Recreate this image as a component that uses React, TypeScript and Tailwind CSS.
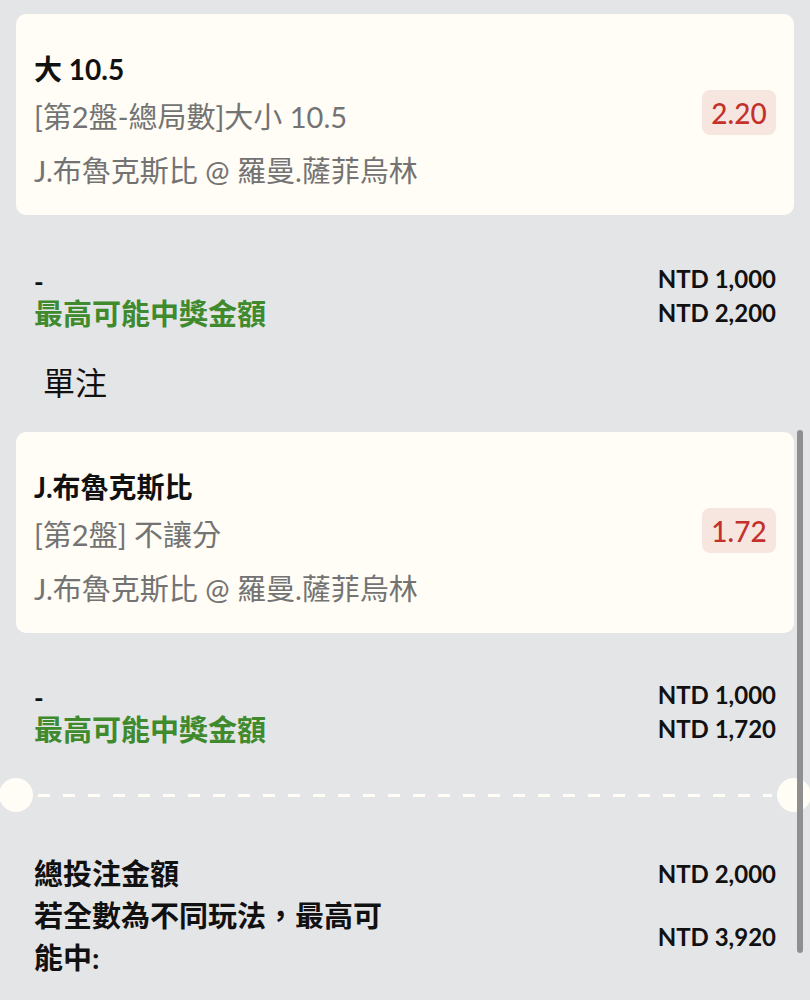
import React from "react";

const FONT = "font-['Lato','Noto_Sans_CJK_TC',sans-serif]";

function BetCard({ title, market, teams, odds }: { title: string; market: string; teams: string; odds: string }) {
  return (
    <div className="mx-4 h-[201px] rounded-[10px] bg-[#fffdf5] pl-[18px] pr-[18px] flex items-center">
      <div className="flex-1 flex flex-col pt-[14px]">
        <div className="text-[28px] leading-[32px] font-bold text-[#111]">{title}</div>
        <div className="mt-[12px] text-[29px] leading-[40px] text-[#737373]">{market}</div>
        <div className="mt-[14px] text-[29px] leading-[40px] text-[#737373]">{teams}</div>
      </div>
      <div className="w-[74px] h-[45px] rounded-[8px] bg-[#f7e6e0] flex items-center justify-center text-[28px] font-medium text-[#c4302b] -mt-[4px]">
        {odds}
      </div>
    </div>
  );
}

function Summary({ stake, win }: { stake: string; win: string }) {
  return (
    <div className="px-[34px] flex justify-between">
      <div className="flex flex-col">
        <div className="text-[26px] leading-[34px] font-bold text-[#111] pt-[2px]">-</div>
        <div className="text-[29px] leading-[34px] font-bold text-[#3f8a2c] -mt-[2px]">最高可能中獎金額</div>
      </div>
      <div className="flex flex-col items-end text-[24px] leading-[34px] font-bold text-[#111] -mt-[1px]">
        <div>{stake}</div>
        <div>{win}</div>
      </div>
    </div>
  );
}

export default function App() {
  return (
    <div className={`${FONT} relative w-[810px] h-[1000px] overflow-hidden bg-[#e4e5e7]`}>
      <div className="pt-[14px]">
        <BetCard title="大 10.5" market="[第2盤-總局數]大小 10.5" teams="J.布魯克斯比 @ 羅曼.薩菲烏林" odds="2.20" />
        <div className="mt-[48px]">
          <Summary stake="NTD 1,000" win="NTD 2,200" />
        </div>
        <div className="mt-[32px] pl-[43px] text-[32px] leading-[40px] text-[#111]">單注</div>
        <div className="mt-[29px]">
          <BetCard title="J.布魯克斯比" market="[第2盤] 不讓分" teams="J.布魯克斯比 @ 羅曼.薩菲烏林" odds="1.72" />
        </div>
        <div className="mt-[46px]">
          <Summary stake="NTD 1,000" win="NTD 1,720" />
        </div>
        <div className="relative mt-[31px] h-[34px] flex items-center">
          <div className="absolute left-[-1px] top-0 w-[34px] h-[34px] rounded-full bg-[#fffdf5]" />
          <div className="absolute right-[-1px] top-0 w-[34px] h-[34px] rounded-full bg-[#fffdf5]" />
          <div className="mx-[38px] w-full h-[3px] bg-[repeating-linear-gradient(90deg,#fffdf5_0_12px,transparent_12px_25px)]" />
        </div>
        <div className="mt-[41px] px-[34px] flex flex-col">
          <div className="flex justify-between items-center h-[42px]">
            <div className="text-[29px] leading-[42px] font-bold text-[#111]">總投注金額</div>
            <div className="text-[24px] font-bold text-[#111]">NTD 2,000</div>
          </div>
          <div className="flex justify-between items-center">
            <div className="w-[360px] text-[29px] leading-[42px] font-bold text-[#111]">若全數為不同玩法，最高可能中:</div>
            <div className="text-[24px] font-bold text-[#111]">NTD 3,920</div>
          </div>
        </div>
      </div>
      <div className="absolute left-[797px] top-[430px] w-[6px] h-[523px] rounded-full bg-[#8f8f8f]" />
    </div>
  );
}
